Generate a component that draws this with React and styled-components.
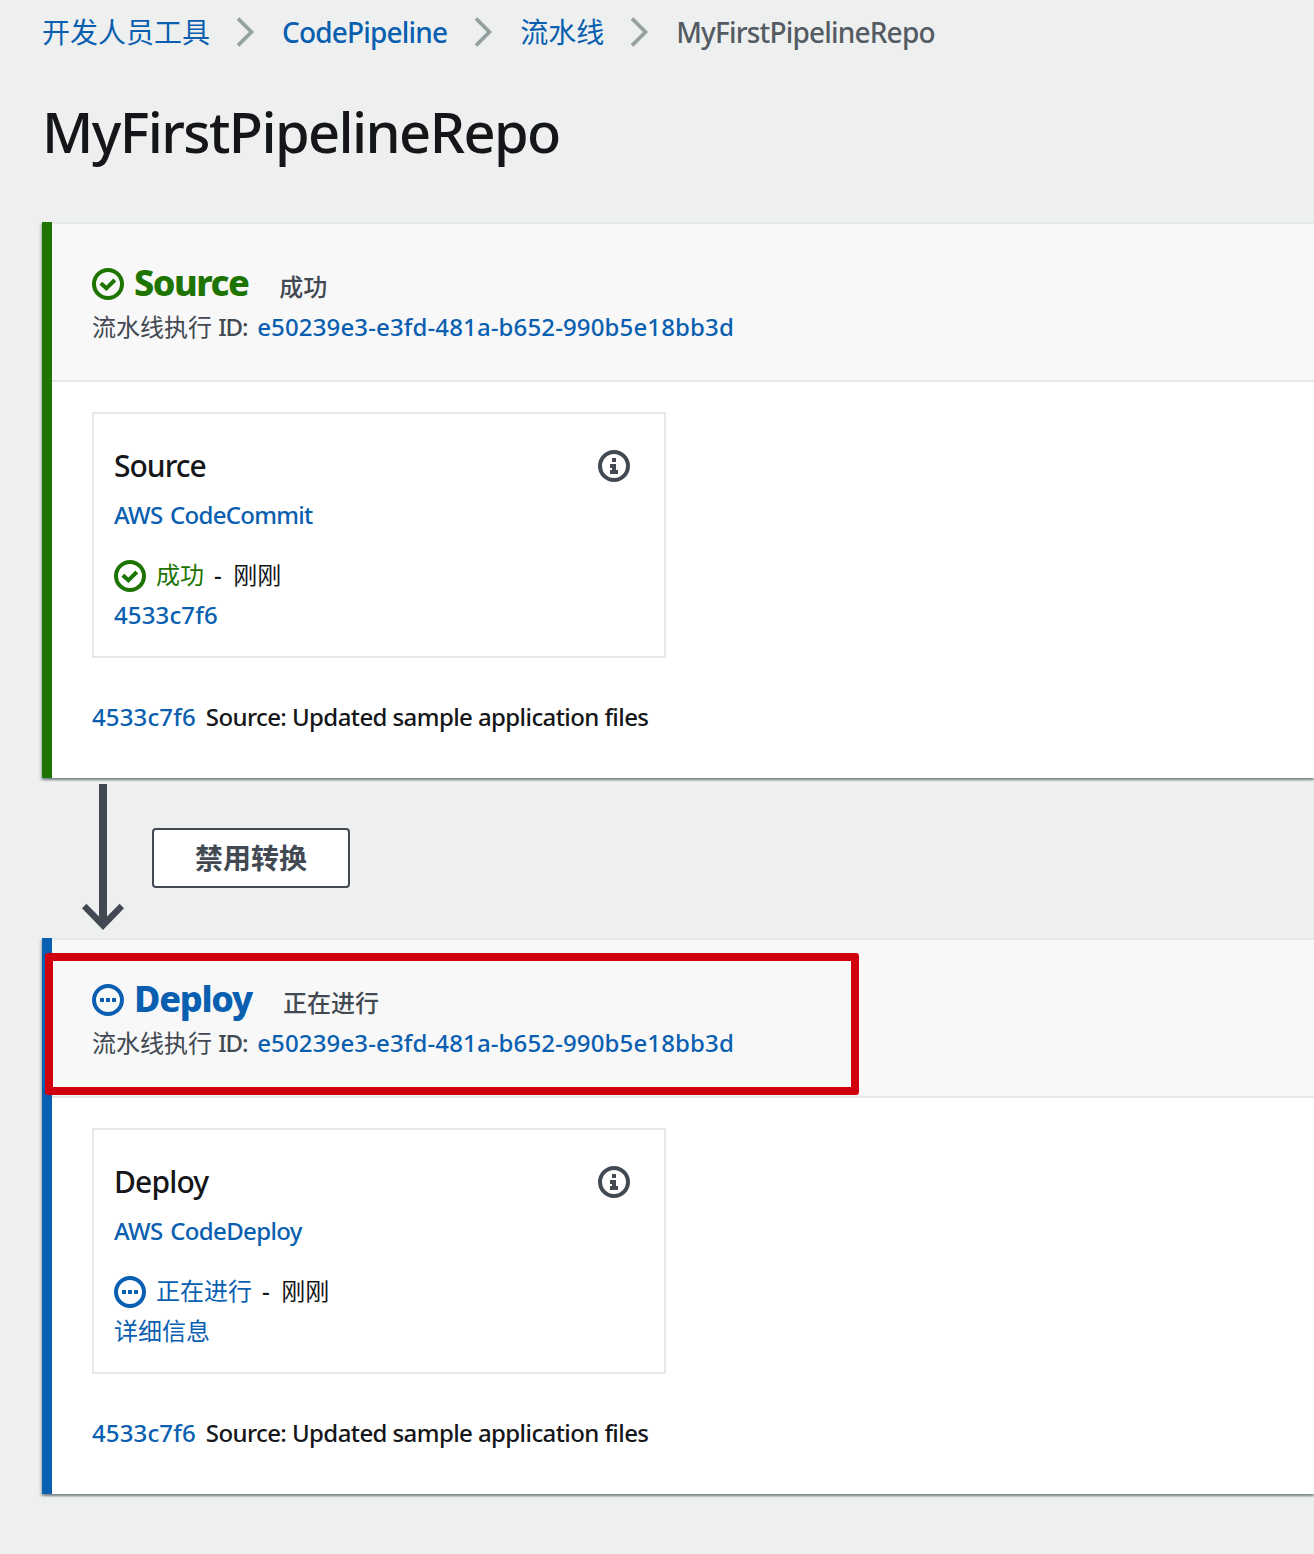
import React from "react";
import styled, { createGlobalStyle } from "styled-components";

const color = {
  page: "#eef0ef",
  text: "#141619",
  muted: "#545b64",
  dark: "#424952",
  link: "#0a5fb0",
  success: "#1d7400",
  progress: "#0a5fb0",
  line: "#e4e8e8",
  highlight: "#d0000c",
};

const GlobalStyle = createGlobalStyle`
  * { box-sizing: border-box; }
  body {
    margin: 0;
    background: ${color.page};
    color: ${color.text};
    font-family: "Noto Sans", "Noto Sans CJK SC", sans-serif;
    font-size: 24px;
    overflow: hidden;
  }
`;

const Page = styled.main`
  height: 1554px;
  width: 100%;
  padding-left: 42px;
  display: flex;
  flex-direction: column;
  overflow: hidden;
  white-space: nowrap;
`;

const Text = styled.span`
  color: ${(p) => p.$color || "inherit"};
  font-weight: ${(p) => p.$weight || 400};
  letter-spacing: ${(p) => p.$track || 0}px;
`;

const Link = styled.a`
  color: ${color.link};
  font-weight: ${(p) => p.$weight || 400};
  letter-spacing: ${(p) => p.$track || 0}px;
  word-spacing: ${(p) => p.$word || 0}px;
  text-decoration: none;
`;

const Breadcrumbs = styled.nav`
  height: 64px;
  display: flex;
  align-items: center;
  font-size: 28px;
  line-height: 40px;
`;

const Chevron = styled.svg`
  width: 20px;
  height: 32px;
  margin: 0 ${(p) => p.$after}px 0 ${(p) => p.$before}px;
  flex: none;
`;

const PageTitle = styled.h1`
  margin: 31px 0 0;
  height: 127px;
  font-size: 56px;
  line-height: 72px;
  font-weight: 500;
  letter-spacing: -1.6px;
`;

const Stage = styled.section`
  position: relative;
  height: 556px;
  flex: none;
  border-left: 10px solid ${(p) => p.$accent};
  background: #fff;
  box-shadow:
    0 2px 2px rgba(0, 28, 36, 0.3),
    2px 2px 2px rgba(0, 28, 36, 0.15),
    -2px 2px 2px rgba(0, 28, 36, 0.15);
`;

const StageHeader = styled.header`
  height: 160px;
  padding: 38px 0 0 40px;
  background: #f8f8f8;
  border-top: 2px solid ${color.line};
  border-bottom: 2px solid ${color.line};
`;

const TitleRow = styled.div`
  display: flex;
  align-items: center;
  height: 44px;
  gap: 10px;
`;

const TitleGroup = styled.div`
  display: flex;
  align-items: baseline;
  line-height: 44px;
  padding-top: 2px;
`;

const StageName = styled.h2`
  margin: 0 ${(p) => p.$after}px 0 0;
  font-size: 36px;
  line-height: 44px;
  font-weight: 800;
  letter-spacing: ${(p) => p.$track}px;
  color: ${(p) => p.$color};
`;

const ExecutionLine = styled.div`
  display: flex;
  align-items: baseline;
  gap: 10px;
  margin-top: 1px;
  line-height: 40px;
  color: ${color.dark};
`;

const StageBody = styled.div`
  padding: 30px 0 0 40px;
`;

const Card = styled.article`
  width: 574px;
  height: 246px;
  padding: 32px 34px 0 20px;
  border: 2px solid ${color.line};
  display: flex;
  flex-direction: column;
`;

const CardHeader = styled.div`
  display: flex;
  align-items: center;
  justify-content: space-between;
  height: 40px;
  font-size: 30px;
  line-height: 40px;
`;

const CardLine = styled.div`
  display: flex;
  align-items: center;
  height: 40px;
  line-height: 38px;
  margin-top: ${(p) => p.$top || 0}px;
  gap: 10px;

  & > a,
  & > span {
    padding-bottom: 2px;
  }
`;

const Dash = styled.span`
  margin-right: 1.5px;
  font-weight: 500;
`;

const Revision = styled.p`
  display: flex;
  gap: 10px;
  margin: 39px 0 0;
  line-height: 40px;
`;

const Transition = styled.div`
  display: flex;
  height: 160px;
  flex: none;
  padding: 6px 0 0 40px;
  gap: 28px;
`;

const Arrow = styled.svg`
  width: 42px;
  height: 148px;
`;

const Button = styled.button`
  width: 198px;
  height: 60px;
  margin-top: 44px;
  padding: 0 0 2px;
  border: 2px solid ${color.dark};
  border-radius: 4px;
  background: #fff;
  color: ${color.dark};
  font-family: "Noto Sans CJK SC", sans-serif;
  font-size: 28px;
  line-height: 40px;
  font-weight: 700;
`;

const Highlight = styled.div`
  position: absolute;
  left: -7px;
  top: 14.5px;
  width: 814px;
  height: 142px;
  border: 8px solid ${color.highlight};
  border-radius: 3px;
`;

const Icon = styled.svg`
  width: 32px;
  height: 32px;
  flex: none;
  color: ${(p) => p.$color};
`;

function StatusIcon({ status }) {
  const done = status === "success";
  return (
    <Icon viewBox="0 0 32 32" $color={done ? color.success : color.progress}>
      <circle cx="16" cy="16" r="14" fill="none" stroke="currentColor" strokeWidth="4" />
      {done ? (
        <path d="M8.8 15.2 14.4 20.3 22.8 12" fill="none" stroke="currentColor" strokeWidth="4" />
      ) : (
        <path d="M8 14h4v4H8zM14 14h4v4h-4zM20 14h4v4h-4z" fill="currentColor" />
      )}
    </Icon>
  );
}

function InfoIcon() {
  return (
    <Icon viewBox="0 0 32 32" $color={color.dark}>
      <circle cx="16" cy="16" r="14" fill="none" stroke="currentColor" strokeWidth="4" />
      <path d="M14 8h4v4h-4zM12 14h6v6h2v4h-8v-4h2v-2h-2z" fill="currentColor" />
    </Icon>
  );
}

function Separator({ before, after }) {
  return (
    <Chevron viewBox="0 0 20 32" $before={before} $after={after}>
      <path d="M3 2.5 16.4 16 3 29.5" fill="none" stroke="#95a0a1" strokeWidth="3.8" />
    </Chevron>
  );
}

const stages = [
  {
    name: "Source",
    nameTrack: -1.5,
    cardTrack: -1,
    providerTrack: -0.7,
    status: "success",
    label: "成功",
    provider: "AWS CodeCommit",
    detail: "4533c7f6",
  },
  {
    name: "Deploy",
    nameTrack: -1.25,
    cardTrack: -0.85,
    providerTrack: -0.65,
    status: "progress",
    label: "正在进行",
    provider: "AWS CodeDeploy",
    detail: "详细信息",
    highlighted: true,
  },
];

function StagePanel({ stage }) {
  const accent = stage.status === "success" ? color.success : color.progress;
  return (
    <Stage $accent={accent}>
      <StageHeader>
        <TitleRow>
          <StatusIcon status={stage.status} />
          <TitleGroup>
            <StageName $color={accent} $track={stage.nameTrack} $after={31}>
              {stage.name}
            </StageName>
            <Text $color={color.dark} $weight={500}>{stage.label}</Text>
          </TitleGroup>
        </TitleRow>
        <ExecutionLine>
          <span>
            <Text>流水线执行</Text> <Text $weight={500} $track={-1.2}>ID:</Text>
          </span>
          <Link href="#" $weight={500} $track={0.13}>e50239e3-e3fd-481a-b652-990b5e18bb3d</Link>
        </ExecutionLine>
      </StageHeader>
      <StageBody>
        <Card>
          <CardHeader>
            <Text $weight={500} $track={stage.cardTrack}>{stage.name}</Text>
            <InfoIcon />
          </CardHeader>
          <CardLine $top={10}>
            <Link href="#" $weight={500} $track={stage.providerTrack} $word={2}>{stage.provider}</Link>
          </CardLine>
          <CardLine $top={20}>
            <StatusIcon status={stage.status} />
            <Text $color={accent}>{stage.label}</Text>
            <Dash>-</Dash>
            <Text>刚刚</Text>
          </CardLine>
          <CardLine>
            {stage.highlighted ? (
              <Link href="#">{stage.detail}</Link>
            ) : (
              <Link href="#" $weight={500} $track={0.13}>{stage.detail}</Link>
            )}
          </CardLine>
        </Card>
        <Revision>
          <Link href="#" $weight={500} $track={0.13}>4533c7f6</Link>
          <Text $weight={500} $track={-0.59}>Source: Updated sample application files</Text>
        </Revision>
      </StageBody>
      {stage.highlighted && <Highlight />}
    </Stage>
  );
}

export default function App() {
  return (
    <>
      <GlobalStyle />
      <Page>
        <Breadcrumbs>
          <Link href="#">开发人员工具</Link>
          <Separator before={25} after={27} />
          <Link href="#" $weight={500} $track={-0.83}>CodePipeline</Link>
          <Separator before={26} after={27} />
          <Link href="#">流水线</Link>
          <Separator before={25} after={27} />
          <Text $color={color.muted} $weight={500} $track={-0.82}>MyFirstPipelineRepo</Text>
        </Breadcrumbs>
        <PageTitle>MyFirstPipelineRepo</PageTitle>
        <StagePanel stage={stages[0]} />
        <Transition>
          <Arrow viewBox="0 0 42 148">
            <path d="M17 0h8v132.5L37.6 119.8 42 124.2 21 146 0 124.2 4.4 119.8 17 132.5z" fill={color.dark} />
          </Arrow>
          <Button>禁用转换</Button>
        </Transition>
        <StagePanel stage={stages[1]} />
      </Page>
    </>
  );
}
